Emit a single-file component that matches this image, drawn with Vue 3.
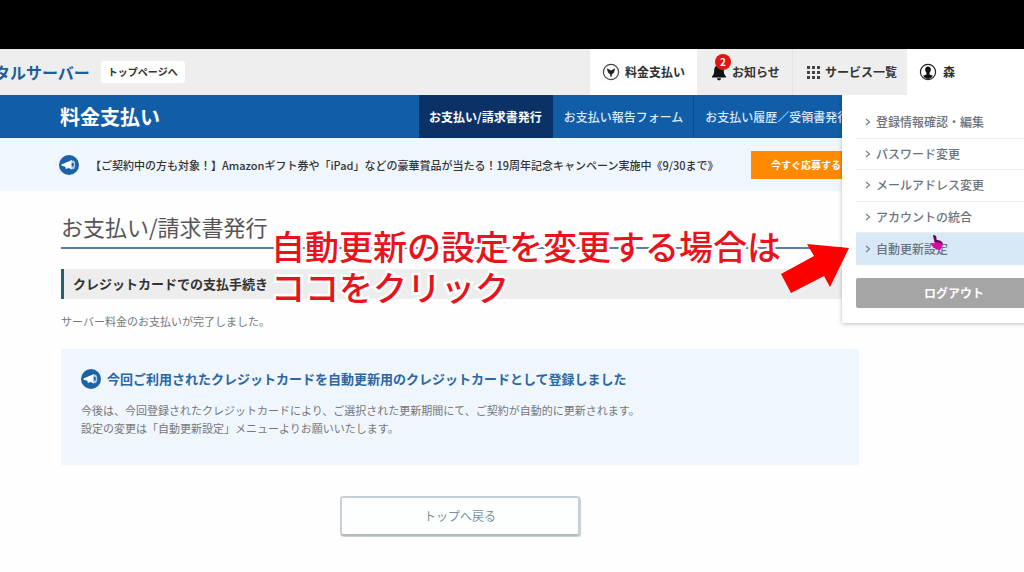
<script setup>
const tabs = [
  { label: 'お支払い/請求書発行', current: true },
  { label: 'お支払い報告フォーム', current: false },
  { label: 'お支払い履歴／受領書発行', current: false },
]
const menuItems = [
  { label: '登録情報確認・編集', active: false },
  { label: 'パスワード変更', active: false },
  { label: 'メールアドレス変更', active: false },
  { label: 'アカウントの統合', active: false },
  { label: '自動更新設定', active: true },
]
const dots = [1, 6, 11]
</script>

<template>
  <div class="page">
    <div class="letterbox"></div>

    <header class="topbar">
      <a class="logo" href="#">タルサーバー</a>
      <a class="home" href="#">トップページへ</a>
      <nav class="global">
        <a class="cell current" href="#">
          <svg width="18" height="18" viewBox="0 0 18 18" aria-hidden="true">
            <circle cx="9" cy="9" r="7.6" fill="none" stroke="#444" stroke-width="1.2" />
            <path d="M4.8 5.2 L9 7.4 L13.2 5.2 L12 9.4 L9.8 11.4 V13.5 H8.2 V11.4 L6 9.4 Z" fill="#222" />
          </svg>
          <span>料金支払い</span>
        </a>
        <a class="cell notice" href="#">
          <span class="bell">
            <svg width="16" height="18" viewBox="0 0 16 18" aria-hidden="true">
              <path d="M8 2 C4.6 2 3.2 4.6 3.2 7.6 C3.2 10.6 2.6 11.8 1 13.4 V14.6 H15 V13.4 C13.4 11.8 12.8 10.6 12.8 7.6 C12.8 4.6 11.4 2 8 2 Z M6 15.2 H10 C10 18 6 18 6 15.2 Z" fill="#111" />
            </svg>
            <span class="badge">2</span>
          </span>
          <span>お知らせ</span>
        </a>
        <a class="cell services" href="#">
          <svg width="13" height="13" viewBox="0 0 13 13" aria-hidden="true">
            <template v-for="y in dots" :key="y">
              <rect v-for="x in dots" :key="x" :x="x - 1" :y="y - 1" width="3" height="3" fill="#444" />
            </template>
          </svg>
          <span>サービス一覧</span>
        </a>
        <div class="account">
          <button class="cell user" type="button" aria-expanded="true">
            <svg width="18" height="18" viewBox="0 0 18 18" aria-hidden="true">
              <circle cx="9" cy="9" r="7.6" fill="#fff" stroke="#222" stroke-width="1.2" />
              <ellipse cx="9" cy="6.6" rx="2.8" ry="3.2" fill="#111" />
              <path d="M7.4 8 H10.6 V11.4 L14 12.8 Q12 16 9 16 Q6 16 4 12.8 L7.4 11.4 Z" fill="#111" />
            </svg>
            <span>森</span>
          </button>
          <div class="menu">
            <ul>
              <li v-for="item in menuItems" :key="item.label" :class="{ active: item.active }">
                <a href="#">
                  <svg width="6" height="8" viewBox="0 0 6 8" aria-hidden="true">
                    <path d="M1 1 L4.5 4 L1 7" fill="none" stroke="#7d868e" stroke-width="1.3" />
                  </svg>
                  <span>{{ item.label }}</span>
                </a>
              </li>
            </ul>
            <button class="logout" type="button">ログアウト</button>
            <svg class="pointer" width="14" height="18" viewBox="0 0 14 18" aria-hidden="true">
              <path d="M3 1 L6 2 L6.5 6 L11 7 L13 9 L12.5 12 L10 16 L6 15.5 L1 10.5 L2 9 L4.5 9.5 Z" fill="#d80aa4" />
              <path d="M3 1 L6 2 L6.5 6 L11 7 L12 9.5 L9 8.5 L5 8 Z" fill="#4c1248" />
            </svg>
          </div>
        </div>
      </nav>
    </header>

    <div class="section">
      <p class="section-name">料金支払い</p>
      <nav class="tabs">
        <a v-for="tab in tabs" :key="tab.label" href="#" :class="{ current: tab.current }">{{ tab.label }}</a>
      </nav>
    </div>

    <div class="banner">
      <svg class="horn" width="20" height="20" viewBox="0 0 20 20" aria-hidden="true">
        <circle cx="10" cy="10" r="10" fill="#1c62a6" />
        <path d="M2.5 9.5 L13 5 V14.5 L8.5 12.6 V14 L6.5 13.4 V11.8 L2.5 10.8 Z" fill="#fff" />
        <ellipse cx="14" cy="9.8" rx="2.2" ry="4.4" fill="#a9cbe8" />
        <ellipse cx="13.8" cy="9.8" rx="1" ry="2" fill="#1c62a6" />
      </svg>
      <p>【ご契約中の方も対象！】Amazonギフト券や「iPad」などの豪華賞品が当たる！19周年記念キャンペーン実施中《9/30まで》</p>
      <a class="apply" href="#">今すぐ応募する</a>
    </div>

    <main>
      <h1>お支払い/請求書発行</h1>
      <h2>クレジットカードでの支払手続き</h2>
      <p class="done">サーバー料金のお支払いが完了しました。</p>
      <section class="info">
        <h3>
          <svg class="horn" width="20" height="20" viewBox="0 0 20 20" aria-hidden="true">
            <circle cx="10" cy="10" r="10" fill="#1c62a6" />
            <path d="M2.5 9.5 L13 5 V14.5 L8.5 12.6 V14 L6.5 13.4 V11.8 L2.5 10.8 Z" fill="#fff" />
            <ellipse cx="14" cy="9.8" rx="2.2" ry="4.4" fill="#a9cbe8" />
            <ellipse cx="13.8" cy="9.8" rx="1" ry="2" fill="#1c62a6" />
          </svg>
          <span>今回ご利用されたクレジットカードを自動更新用のクレジットカードとして登録しました</span>
        </h3>
        <p>今後は、今回登録されたクレジットカードにより、ご選択された更新期間にて、ご契約が自動的に更新されます。<br />設定の変更は「自動更新設定」メニューよりお願いいたします。</p>
      </section>
      <button class="back" type="button">トップへ戻る</button>
    </main>

    <p class="callout">自動更新の設定を変更する場合は<br />ココをクリック</p>
    <svg class="arrow" width="70" height="52" viewBox="0 0 70 52" aria-hidden="true">
      <path d="M27 2 L69 6 L50 45 L44 34 L11 51 L1 32 L34 14 Z" fill="#fe0000" />
    </svg>
  </div>
</template>

<style>
body {
  margin: 0;
  background: #fefefe;
}
</style>

<style scoped>
.page {
  position: relative;
  min-height: 100vh;
  overflow: hidden;
  background: #fefefe;
  color: #333;
  font-family: "Noto Sans CJK JP", sans-serif;
  font-size: 12px;
  line-height: 18px;
}
.page * {
  box-sizing: border-box;
}
h1, h2, h3, p, ul {
  margin: 0;
  padding: 0;
}
a {
  color: inherit;
  text-decoration: none;
}
button {
  font: inherit;
  color: inherit;
  border: 0;
  cursor: pointer;
}
svg {
  display: block;
  flex: none;
}
.letterbox {
  height: 49px;
  background: #000;
}
.topbar {
  display: flex;
  align-items: center;
  height: 46px;
  background: #eee;
  white-space: nowrap;
}
.logo {
  margin-left: -6px;
  color: #1d5d99;
  font-size: 16px;
  font-weight: 700;
}
.home {
  margin-left: 11px;
  padding: 2px 7px;
  border-radius: 3px;
  background: #fff;
  font-size: 10px;
  font-weight: 700;
}
.global {
  display: flex;
  align-self: stretch;
  margin-left: auto;
  font-weight: 700;
}
.cell {
  display: flex;
  align-items: center;
  gap: 5px;
  height: 100%;
  padding: 0 12px;
}
.current.cell {
  width: 107px;
  background: #fff;
}
.notice {
  width: 96px;
  padding: 0 14px;
  border-right: 1px solid #e4e4e4;
}
.services {
  width: 114px;
  padding: 0 14px;
}
.bell {
  position: relative;
}
.badge {
  position: absolute;
  left: 4px;
  top: -9px;
  width: 16px;
  height: 16px;
  border-radius: 50%;
  background: #e3150f;
  color: #fff;
  font-size: 10px;
  line-height: 16px;
  text-align: center;
}
.account {
  position: relative;
  width: 117px;
}
.user {
  width: 100%;
  gap: 6px;
  background: #fff;
}
.menu {
  position: absolute;
  z-index: 2;
  top: 46px;
  left: -65px;
  width: 224px;
  padding: 12px 14px 15px;
  background: #fff;
  box-shadow: 0 1px 4px rgba(0, 0, 0, 0.25);
  clip-path: inset(0 0 -8px -8px);
}
.menu ul {
  display: grid;
  grid-auto-rows: 1fr;
  height: 158px;
  list-style: none;
}
.menu li {
  border-bottom: 1px solid #ededed;
}
.menu li.active {
  border-color: #d9e8f7;
  background: #d9e8f7;
}
.menu li a {
  display: flex;
  align-items: center;
  gap: 5px;
  height: 100%;
  padding-left: 9px;
  color: #6b747c;
  font-weight: 500;
}
.logout {
  width: 100%;
  height: 30px;
  margin-top: 13px;
  padding: 0;
  border-radius: 2px;
  background: #a5a5a5;
  color: #fff;
  font-weight: 700;
}
.pointer {
  position: absolute;
  left: 88px;
  top: 139px;
}
.section {
  display: flex;
  align-items: center;
  height: 43px;
  padding-left: 60px;
  background: #125da8;
  color: #fff;
  white-space: nowrap;
}
.section-name {
  flex: 0 0 359px;
  font-size: 20px;
  font-weight: 700;
  line-height: 28px;
}
.tabs {
  display: flex;
  align-self: stretch;
}
.tabs a {
  display: flex;
  align-items: center;
  padding: 0 10px 0 11px;
  border-right: 1px solid #0d4d8e;
  color: #d8e9fa;
  font-weight: 500;
}
.tabs a.current {
  padding: 0 10px;
  border-color: #0b3266;
  background: #0b3266;
  color: #fff;
  font-weight: 700;
}
.banner {
  display: flex;
  align-items: center;
  height: 53px;
  padding-left: 59px;
  background: #eff6fe;
  font-size: 11px;
  font-weight: 500;
  white-space: nowrap;
}
.banner p {
  flex: 0 0 661px;
  margin-left: 11px;
}
.apply {
  padding: 5px 20px;
  background: #ff8a00;
  color: #fff;
  font-size: 10px;
  font-weight: 700;
}
main {
  max-width: 859px;
  padding: 20px 0 36px 61px;
}
h1 {
  padding-bottom: 6px;
  border-bottom: 2px solid #5c7cad;
  color: #555;
  font-size: 22px;
  font-weight: 400;
  line-height: 30px;
}
h2 {
  margin-top: 20px;
  padding: 6px 9px;
  border-left: 3px solid #245f83;
  background: #ededed;
  font-size: 13px;
  font-weight: 700;
}
.done {
  margin-top: 13px;
  color: #777;
  font-size: 11px;
}
.info {
  margin-top: 19px;
  padding: 20px 20px 28px;
  background: #eff6fd;
}
.info h3 {
  display: flex;
  align-items: center;
  gap: 6px;
  color: #2b66a5;
  font-size: 13px;
  font-weight: 700;
  line-height: 20px;
}
.info p {
  margin-top: 12px;
  color: #777;
  font-size: 11px;
}
.back {
  display: block;
  width: 240px;
  height: 40px;
  margin: 31px auto 0;
  padding: 0;
  border: 2px solid #c6d0d8;
  border-bottom-color: #b5bdc4;
  border-radius: 3px;
  background: #fdffff;
  box-shadow: 1px 1px 1px #c9ced2;
  color: #7791a3;
}
.callout {
  position: absolute;
  left: 271px;
  top: 225px;
  color: #e8131b;
  font-size: 34px;
  font-weight: 500;
  line-height: 41px;
  white-space: nowrap;
  -webkit-text-stroke: 5px #fff;
  paint-order: stroke fill;
}
.arrow {
  position: absolute;
  z-index: 3;
  left: 780px;
  top: 242px;
}
</style>
